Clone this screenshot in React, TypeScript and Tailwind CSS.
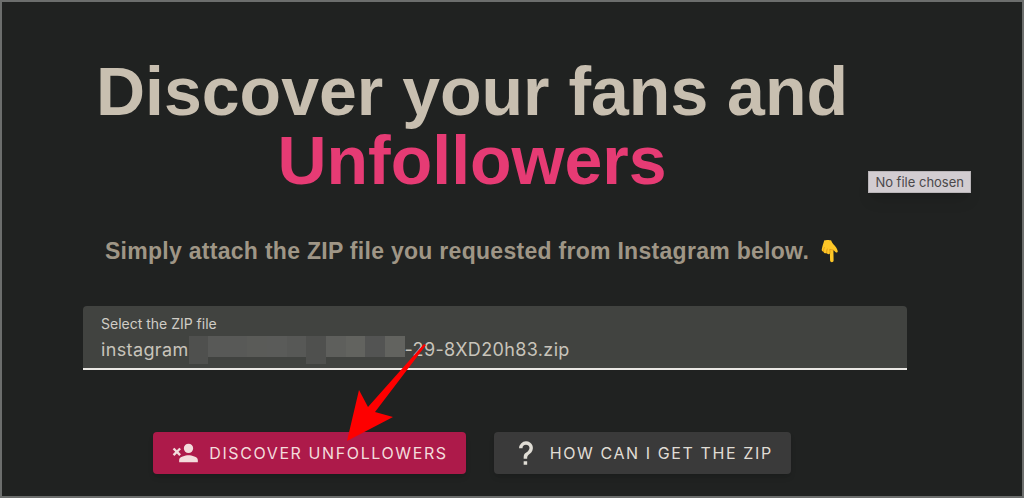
import { useState, type ReactNode } from "react";

// tone of each tile that hides the account name in the file name
const maskTiles = [
  "bg-[#4f504e] h-7",
  "bg-[#585957] h-[21px]",
  "bg-[#585957] h-[21px]",
  "bg-[#5a5b58] h-[21px]",
  "bg-[#5a5b59] h-[21px]",
  "bg-[#575856] h-[21px]",
  "bg-[#4f504e] h-7",
  "bg-[#5e5f5c] h-[21px]",
  "bg-[#62635f] h-[21px]",
  "bg-[#535453] h-[21px]",
  "bg-[#62635f] h-[21px]",
];

function AccountRemoveIcon() {
  return (
    <svg viewBox="0 0 24 24" className="size-7 fill-current" aria-hidden="true">
      <path d="M15,14C12.33,14 7,15.33 7,18V20H23V18C23,15.33 17.67,14 15,14M15,12A4,4 0 0,0 19,8A4,4 0 0,0 15,4A4,4 0 0,0 11,8A4,4 0 0,0 15,12M5,9.59L7.12,7.46L8.54,8.88L6.41,11L8.54,13.12L7.12,14.54L5,12.41L2.88,14.54L1.46,13.12L3.59,11L1.46,8.88L2.88,7.46L5,9.59Z" />
    </svg>
  );
}

function HelpIcon() {
  return (
    <svg viewBox="0 0 24 24" className="size-7 fill-current" aria-hidden="true">
      <path d="M10,19H13V22H10V19M12,2C17.35,2.22 19.68,7.62 16.5,11.67C15.67,12.67 14.33,13.33 13.67,14.17C13,15 13,16 13,17H10C10,15.33 10,13.92 10.67,12.92C11.33,11.92 12.67,11.33 13.5,10.67C15.92,8.43 15.32,5.26 12,5A3,3 0 0,0 9,8H6A6,6 0 0,1 12,2Z" />
    </svg>
  );
}

function PointDownIcon() {
  return (
    <svg viewBox="0 0 18 24" className="h-6 w-[18px]" role="img" aria-label="Pointing down">
      <path
        d="M3.2 1.6C4.6.8 8.6.7 10.2 1.5c.6 1.7 1.6 3.2 3.4 4.9 1.400 1.300 2.600 3.500 3.100 5.500.3 1.400-1 2.200-2.100 1.300l-2.200-2.100.2 10.500c0 2.200-3.400 2.200-3.500 0L8.900 14.500c-1 1-2.700.8-3.200-.4-1.300.7-2.900 0-3.100-1.400C1 12.600.4 11.200.9 9.800 1.300 7.600 2.400 4.500 3.200 1.600Z"
        fill="#fdc727"
      />
      <path
        d="M5.700 14.100c-.2-1.500 0-2.900.5-4.100M2.600 12.700c-.2-1.500.1-3 .7-4.200M8.900 14.500c.3-1.500.2-2.900-.2-4.100 1.200.3 2.500.3 3.700.7"
        fill="none"
        stroke="#d98e12"
        strokeWidth="0.7"
        strokeLinecap="round"
      />
    </svg>
  );
}

function ActionButton({
  icon,
  tone,
  children,
}: {
  icon: ReactNode;
  tone: string;
  children: ReactNode;
}) {
  return (
    <button
      type="button"
      className={`flex items-center gap-2.5 rounded px-[18px] py-[7px] text-base leading-7 tracking-widest whitespace-nowrap shadow-md ${tone}`}
    >
      {icon}
      {children}
    </button>
  );
}

export default function App() {
  const [fileEnd] = useState("-29-8XD20h83.zip");

  return (
    <main className="relative min-h-screen border-2 border-[#6c6e6d] bg-[#202221] pt-[55px] pr-[115px] pb-[22px] pl-[35px] font-['Inter',sans-serif]">
      <h1 className="text-center font-['Liberation_Sans',sans-serif] text-[68px] leading-[69px] font-bold text-[#c8bfb0]">
        Discover your fans and <span className="block text-[#e63b74]">Unfollowers</span>
      </h1>

      <p className="mt-10 flex items-center justify-center gap-3 font-['Liberation_Sans',sans-serif] text-[23px] leading-8 font-bold tracking-[0.0125em] text-[#9f9686]">
        Simply attach the ZIP file you requested from Instagram below.
        <PointDownIcon />
      </p>

      <div className="mt-[39px] pl-[46px]">
        <div className="relative rounded-t border-b-2 border-[#eae8e4] bg-[#414340] px-[18px] pt-2 pb-2">
          <label htmlFor="zip-file" className="block text-sm leading-5 text-[#d0cdc6]">
            Select the ZIP file
          </label>
          <div className="flex h-[26px] items-start text-lg leading-8 tracking-[0.02em] text-[#c8c4bb]">
            <span>instagram</span>
            <span className="mt-0.5 flex w-[216px] items-start" aria-hidden="true">
              {maskTiles.map((tile, i) => (
                <span key={i} className={`flex-1 ${tile}`} />
              ))}
            </span>
            <span>{fileEnd}</span>
          </div>
          <input
            id="zip-file"
            type="file"
            accept=".zip"
            className="absolute inset-0 size-full cursor-pointer opacity-0"
          />
        </div>
      </div>

      <div className="mt-[62px] flex justify-center gap-7">
        <div className="relative">
          <ActionButton icon={<AccountRemoveIcon />} tone="bg-[#ad1a4a] text-[#f3dcdc]">
            DISCOVER UNFOLLOWERS
          </ActionButton>
          <svg
            viewBox="0 0 82 102"
            className="pointer-events-none absolute bottom-[30px] left-48 h-[102px] w-[82px]"
            aria-hidden="true"
          >
            <path d="M2 99 14 48 23 65 79 2 81 3 30 70 48 75Z" fill="#fe0000" />
          </svg>
        </div>
        <ActionButton icon={<HelpIcon />} tone="bg-[#3a3a3a] text-[#e0ddd5]">
          HOW CAN I GET THE ZIP
        </ActionButton>
      </div>

      <div
        role="tooltip"
        className="absolute top-[169px] right-[51px] border border-[#b9b5b8] bg-[#d2cdd1] px-1.5 text-[13px] leading-5 text-[#4a484a] shadow-lg"
      >
        No file chosen
      </div>
    </main>
  );
}
